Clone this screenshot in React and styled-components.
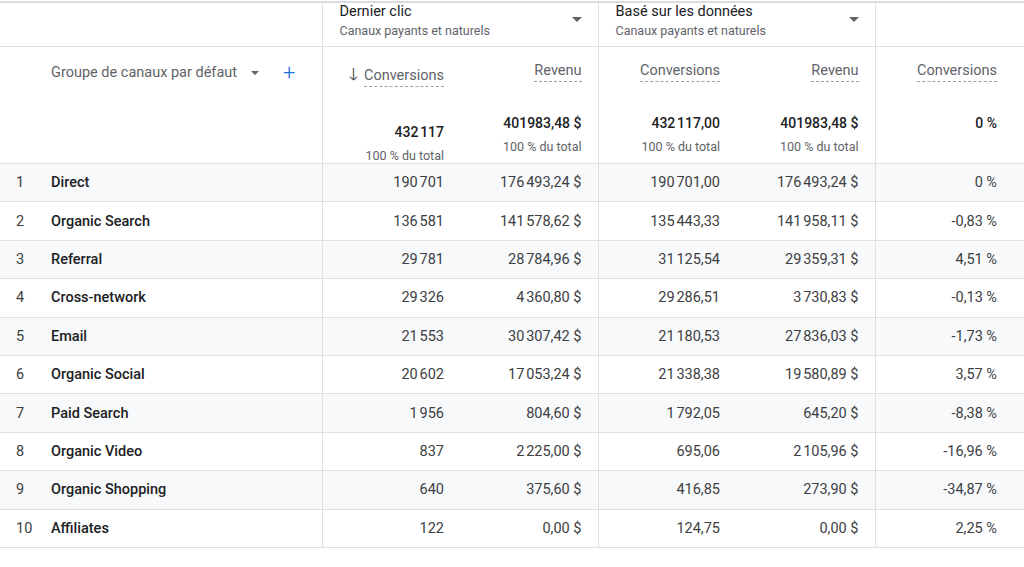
import styled, { createGlobalStyle } from "styled-components";

const Global = createGlobalStyle`
  body { margin: 0; background: #fff; font-family: Roboto, "Liberation Sans", sans-serif; color: #202124; }
`;

const Page = styled.div`
  border-top: 2px solid #dadce0;
  margin-top: 1px;
  width: 1024px;
  overflow: hidden;
`;

const Table = styled.table`
  border-collapse: collapse;
  table-layout: fixed;
  width: 1030px;
  font-size: 14px;
`;

const GroupCell = styled.th`
  height: 43px;
  padding: 0 16px 0 17px;
  text-align: left;
  font-weight: 400;
  vertical-align: top;
  border-bottom: 1px solid #e0e0e0;
  border-left: ${(p) => (p.$first ? "none" : "1px solid #e0e0e0")};
`;

const GroupInner = styled.div`
  display: flex;
  align-items: flex-start;
  justify-content: space-between;
  padding-top: 1px;
`;

const GroupTitle = styled.div`
  font-size: 14.5px;
  color: #202124;
  line-height: 16px;
`;

const GroupSub = styled.div`
  font-size: 12.5px;
  color: #5f6368;
  margin-top: 3px;
`;

const Caret = styled.span`
  width: 0;
  height: 0;
  border-left: 5px solid transparent;
  border-right: 5px solid transparent;
  border-top: 5px solid #5f6368;
  margin-top: 13px;
  display: inline-block;
`;

const HeadCell = styled.th`
  height: 116px;
  padding: 0 16px 0 0;
  font-weight: 400;
  text-align: right;
  vertical-align: top;
  border-bottom: 1px solid #e0e0e0;
  border-left: ${(p) => (p.$sep ? "1px solid #e0e0e0" : "none")};
`;

const DimHead = styled.div`
  display: flex;
  align-items: center;
  gap: 14px;
  padding: 17px 0 0 51px;
  color: #5f6368;
  font-size: 14.5px;
`;

const Plus = styled.span`
  color: #1a73e8;
  font-size: 22px;
  font-weight: 300;
  margin-left: 10px;
  line-height: 16px;
`;

const MetricName = styled.div`
  padding-top: 15px;
  color: #5f6368;
  font-size: 14.5px;
  display: flex;
  justify-content: flex-end;
  align-items: center;
  gap: 6px;
`;

const Arrow = styled.span`
  font-size: 17px;
  color: #3c4043;
`;

const Dashed = styled.span`
  border-bottom: 1px dashed #9aa0a6;
  padding-bottom: 2px;
`;

const Total = styled.div`
  margin-top: 33px;
  font-weight: 500;
  font-size: 14px;
  color: #202124;
`;

const TotalSub = styled.div`
  margin-top: 8px;
  font-size: 12.5px;
  color: #5f6368;
`;

const Row = styled.tr`
  background: ${(p) => (p.$alt ? "#f8f9fa" : "#fff")};
`;

const Cell = styled.td`
  height: 37.4px;
  padding: 0 16px 0 0;
  text-align: right;
  border-bottom: 1px solid #e0e0e0;
  border-left: ${(p) => (p.$sep ? "1px solid #e0e0e0" : "none")};
  color: #3c4043;
  font-size: 14.5px;
`;

const DimCell = styled.td`
  border-bottom: 1px solid #e0e0e0;
  padding: 0;
  font-size: 14.5px;
`;

const DimInner = styled.div`
  display: flex;
  align-items: center;
`;

const Rank = styled.span`
  width: 51px;
  padding-left: 16px;
  box-sizing: border-box;
  color: #3c4043;
`;

const Name = styled.span`
  font-weight: 500;
  color: #202124;
`;

const rows = [
  ["Direct", "190\u202f701", "176\u202f493,24 $", "190\u202f701,00", "176\u202f493,24 $", "0 %"],
  ["Organic Search", "136\u202f581", "141\u202f578,62 $", "135\u202f443,33", "141\u202f958,11 $", "-0,83 %"],
  ["Referral", "29\u202f781", "28\u202f784,96 $", "31\u202f125,54", "29\u202f359,31 $", "4,51 %"],
  ["Cross-network", "29\u202f326", "4\u202f360,80 $", "29\u202f286,51", "3\u202f730,83 $", "-0,13 %"],
  ["Email", "21\u202f553", "30\u202f307,42 $", "21\u202f180,53", "27\u202f836,03 $", "-1,73 %"],
  ["Organic Social", "20\u202f602", "17\u202f053,24 $", "21\u202f338,38", "19\u202f580,89 $", "3,57 %"],
  ["Paid Search", "1\u202f956", "804,60 $", "1\u202f792,05", "645,20 $", "-8,38 %"],
  ["Organic Video", "837", "2\u202f225,00 $", "695,06", "2\u202f105,96 $", "-16,96 %"],
  ["Organic Shopping", "640", "375,60 $", "416,85", "273,90 $", "-34,87 %"],
  ["Affiliates", "122", "0,00 $", "124,75", "0,00 $", "2,25 %"],
];

export default function App() {
  return (
    <>
      <Global />
      <Page>
        <Table>
          <colgroup>
            <col style={{ width: 322 }} />
            <col style={{ width: 138 }} />
            <col style={{ width: 138 }} />
            <col style={{ width: 138 }} />
            <col style={{ width: 139 }} />
            <col style={{ width: 155 }} />
          </colgroup>
          <thead>
            <tr>
              <GroupCell $first />
              <GroupCell colSpan={2}>
                <GroupInner>
                  <div>
                    <GroupTitle>Dernier clic</GroupTitle>
                    <GroupSub>Canaux payants et naturels</GroupSub>
                  </div>
                  <Caret />
                </GroupInner>
              </GroupCell>
              <GroupCell colSpan={2}>
                <GroupInner>
                  <div>
                    <GroupTitle>Basé sur les données</GroupTitle>
                    <GroupSub>Canaux payants et naturels</GroupSub>
                  </div>
                  <Caret />
                </GroupInner>
              </GroupCell>
              <GroupCell />
            </tr>
            <tr>
              <HeadCell style={{ textAlign: "left", padding: 0 }}>
                <DimHead>
                  Groupe de canaux par défaut
                  <Caret style={{ marginTop: 0, borderWidth: "4px 4px 0" }} />
                  <Plus>+</Plus>
                </DimHead>
              </HeadCell>
              <HeadCell $sep>
                <MetricName>
                  <Arrow>🡓</Arrow>
                  <Dashed>Conversions</Dashed>
                </MetricName>
                <Total>432{"\u202f"}117</Total>
                <TotalSub>100 % du total</TotalSub>
              </HeadCell>
              <HeadCell>
                <MetricName><Dashed>Revenu</Dashed></MetricName>
                <Total>401983,48 $</Total>
                <TotalSub>100 % du total</TotalSub>
              </HeadCell>
              <HeadCell $sep>
                <MetricName><Dashed>Conversions</Dashed></MetricName>
                <Total>432{"\u202f"}117,00</Total>
                <TotalSub>100 % du total</TotalSub>
              </HeadCell>
              <HeadCell>
                <MetricName><Dashed>Revenu</Dashed></MetricName>
                <Total>401983,48 $</Total>
                <TotalSub>100 % du total</TotalSub>
              </HeadCell>
              <HeadCell $sep style={{ paddingRight: 33 }}>
                <MetricName><Dashed>Conversions</Dashed></MetricName>
                <Total>0 %</Total>
              </HeadCell>
            </tr>
          </thead>
          <tbody>
            {rows.map((r, i) => (
              <Row key={r[0]} $alt={i % 2 === 0}>
                <DimCell>
                  <DimInner>
                    <Rank>{i + 1}</Rank>
                    <Name>{r[0]}</Name>
                  </DimInner>
                </DimCell>
                <Cell $sep>{r[1]}</Cell>
                <Cell>{r[2]}</Cell>
                <Cell $sep>{r[3]}</Cell>
                <Cell>{r[4]}</Cell>
                <Cell $sep style={{ paddingRight: 33 }}>{r[5]}</Cell>
              </Row>
            ))}
          </tbody>
        </Table>
      </Page>
    </>
  );
}
